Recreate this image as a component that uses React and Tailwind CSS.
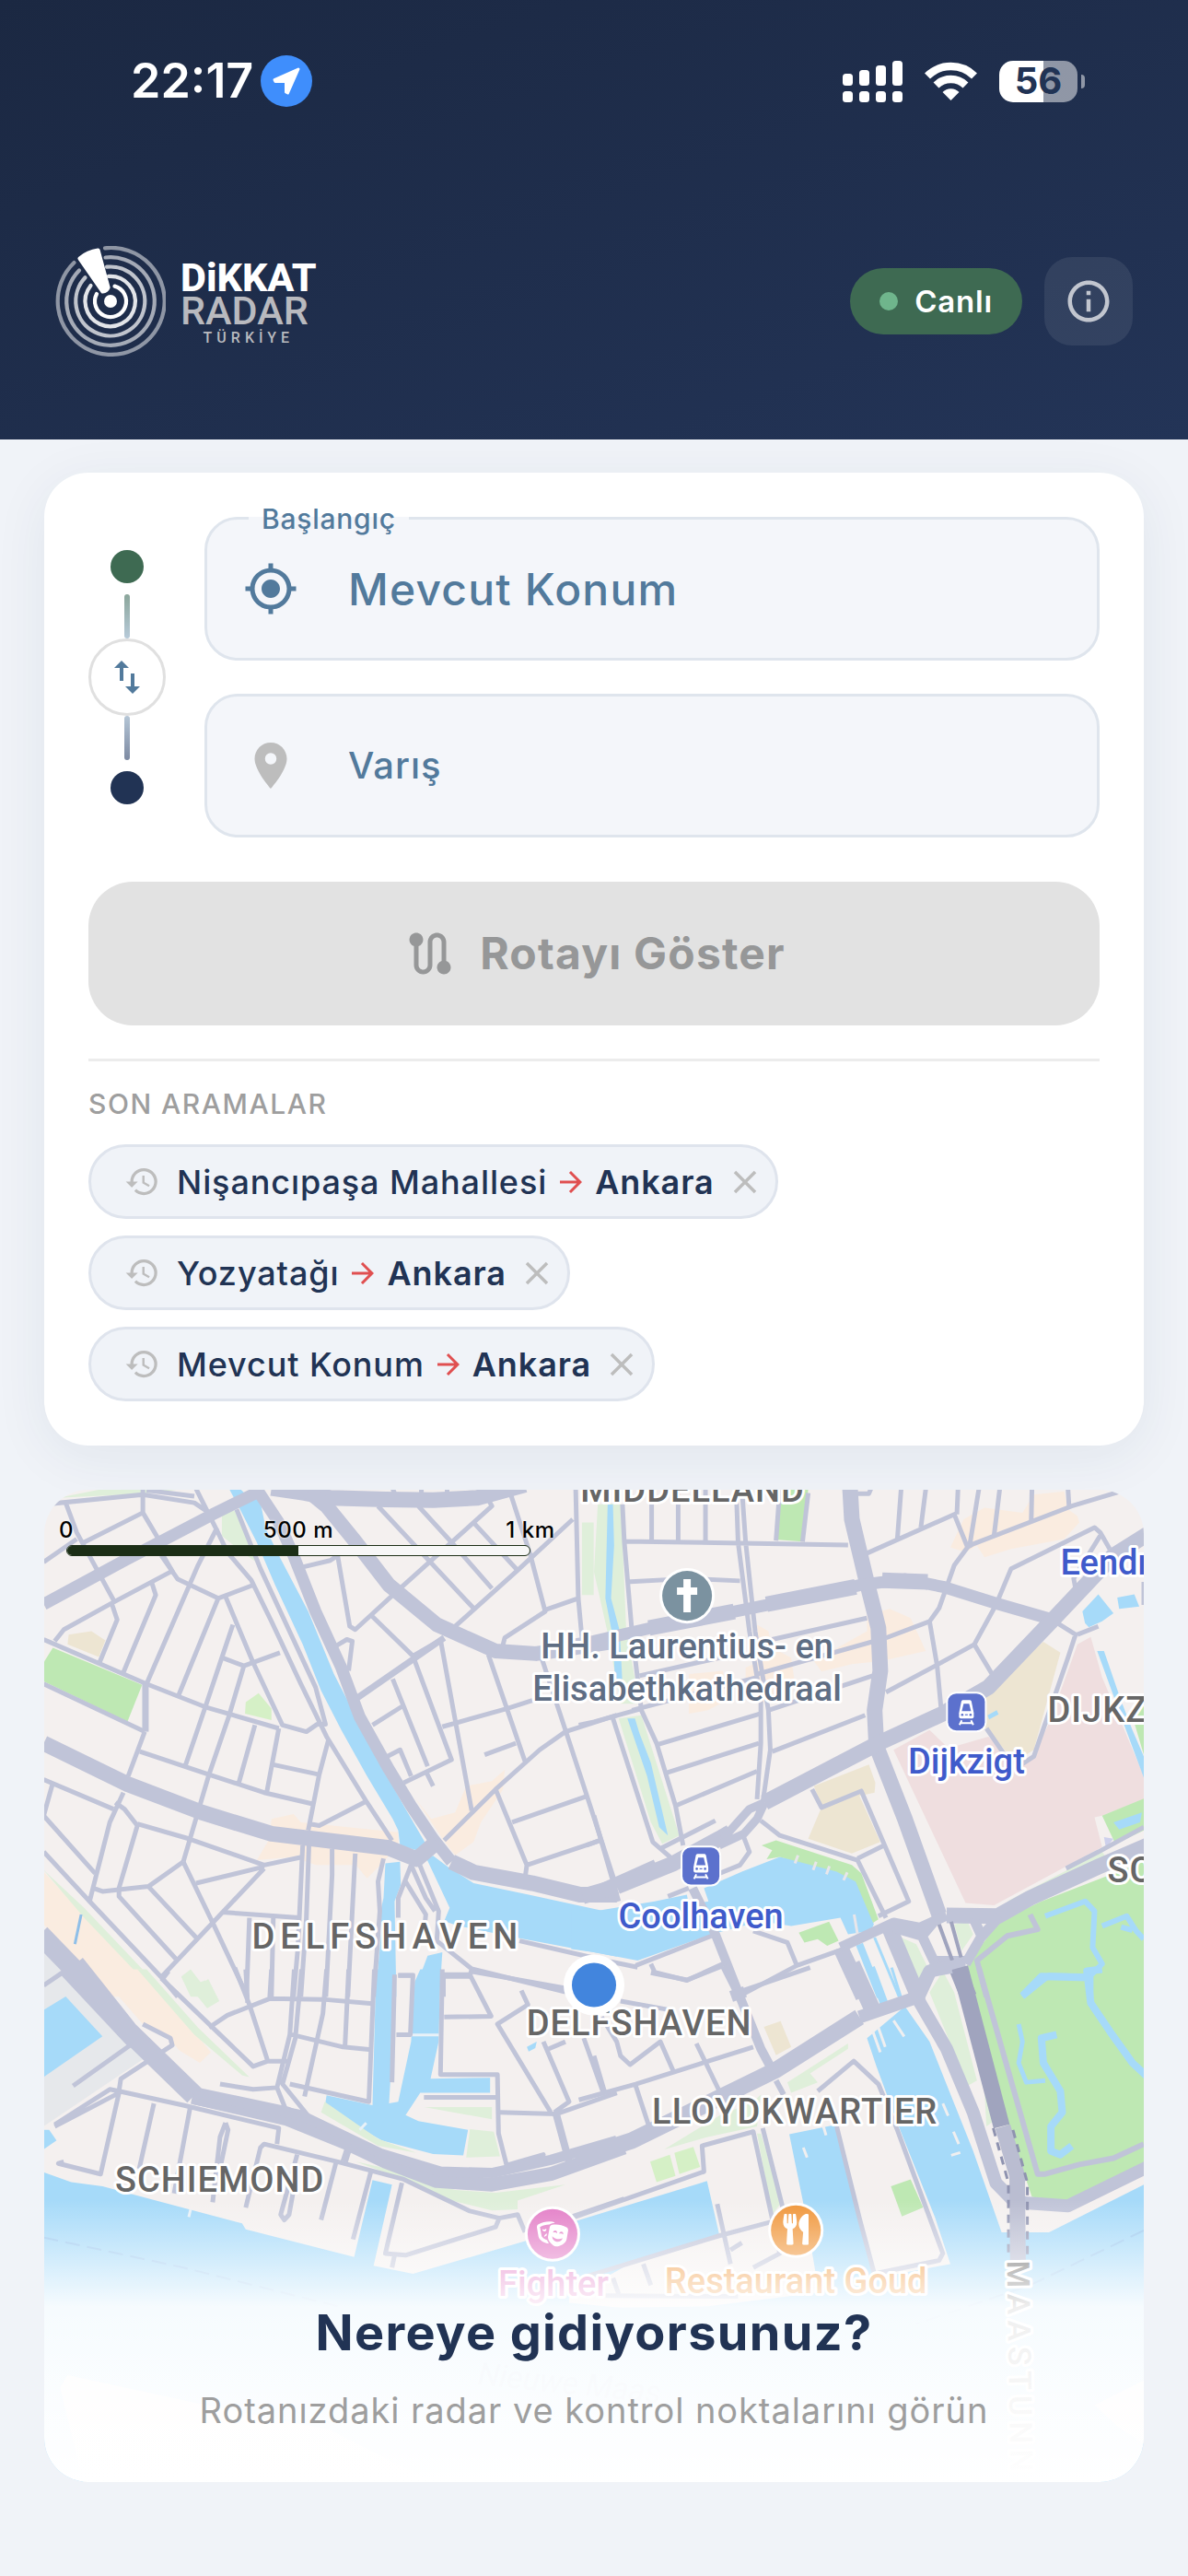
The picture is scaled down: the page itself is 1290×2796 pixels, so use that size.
// src/App.jsx

import { useState } from 'react';
import {
  MdArrowForward,
  MdClose,
  MdHistory,
  MdInfoOutline,
  MdLocationOn,
  MdMyLocation,
  MdRoute,
  MdSwapVert,
} from 'react-icons/md';
import { FaTheaterMasks, FaUtensils } from 'react-icons/fa';

const ROAD = '#c0c4d8';
const WATER = '#a6daf9';
const PARK = '#bee8b3';
const GRASS = '#dfefda';
const LAWN = '#d5f0c6';
const SHOPS = '#faece0';
const SCHOOL = '#ede5d2';
const HOSPITAL = '#efdedf';
const PORT = '#e6e8eb';
const LAND = '#f4f0ef';
const TUNNEL = '#a0a4be';

// Map is cut into four tiles, each one has its own coordinate space.
// areas: [fill, path], roads: [stroke, width, path, dash]
const tiles = [
  {
    id: 'nw',
    transform: 'translate(40 1600) scale(0.3986 0.35714)',
    areas: [
      [GRASS, 'M60 75L180 48H400L290 62Z'],
      [GRASS, 'M505 115L540 115 570 190 605 275 560 240 505 190Z'],
      [GRASS, 'M1485 150H1517V370H1485Z'],
      [SCHOOL, 'M88 490L150 480 188 508 170 558 85 520Z'],
      [PARK, 'M45 530L288 643 248 755 20 632V575Z'],
      [LAWN, 'M570 695L605 668 640 715V750L568 730Z'],
      [SHOPS, 'M640 1050L700 1035 720 1060 985 1090V1130L945 1180 900 1230 870 1190 760 1190 700 1165 600 1175 635 1110Z'],
      [SHOPS, 'M1030 985L1075 1050 1140 1030 1170 950 1240 935 1275 900 1270 960 1210 1060 1190 1120 1140 1160 1105 1110Z'],
      [PORT, 'M20 1420L50 1450 170 1590H20Z'],
      [SHOPS, 'M20 1210L120 1330 345 1590H200L20 1370Z'],
      [GRASS, 'M20 1205L130 1320 360 1590H335L130 1350Z'],
      [GRASS, 'M395 1530L415 1512 440 1548 460 1540 480 1590H420Z'],
      [WATER, 'M525 48H555L580 75H600L612 100 625 170 665 260 740 420 810 610 870 740 930 870 1000 1010 1060 1125 1050 1150 990 1130 985 1085 970 1050 900 920 830 780 775 660 725 520 650 340 600 210 550 100Z'],
      [WATER, 'M1062 1170L1080 1162 1120 1195 1190 1245 1340 1280 1580 1338V1468L1315 1412 1150 1375 1110 1360 1125 1320Z'],
      [WATER, 'M950 1185L990 1180 992 1250 975 1300 980 1590H923L940 1380 935 1340 945 1290Z'],
      [WATER, 'M1065 1465L1105 1455 1097 1590H1032L1050 1510Z'],
    ],
    roads: [
      ['#8fbfe8', 3, 'M122 1340L105 1430'],
      [ROAD, 5, 'M20 95L290 65 430 90 470 120M300 52L430 70M290 48V120L130 210M290 120L330 195M80 90L110 180 215 395M340 250L385 322 495 380 590 340M435 48L490 170 440 280 300 640M495 380L387 675'],
      [ROAD, 5, 'M515 375L590 575 670 765 735 785 765 762 787 762 760 650 610 290 545 110M490 170L520 240 585 325 640 450 720 640 790 800 900 1000 968 1115'],
      [ROAD, 5, 'M50 510L75 475 205 395 370 297 345 250M205 395L220 445 172 575M315 335L325 370 237 605M20 505L300 640 460 710 660 775M20 640L295 785M20 270L110 200'],
      [ROAD, 7, 'M297 785V640'],
      [ROAD, 5, 'M295 785L250 920M237 970L200 1060 145 1300M282 845L470 915 620 970 755 1005M460 710L405 890M525 735L470 915 400 1180M595 765L550 945M660 775L627 970M795 810L770 915 740 1085M645 885L770 915M745 1065L770 1070 900 995'],
      [ROAD, 5, 'M535 460L505 560 460 710M505 560L565 585 663 545M565 585L525 735M20 930L210 1020M45 940L20 1040 160 1215M20 1150L145 1300 340 1530 385 1590M215 1000L240 1020 275 1070 225 1260V1285L380 1475'],
      [ROAD, 5, 'M275 1065L415 1110 620 1190 725 1165M400 1180L480 1365 575 1590M400 1180L305 1255 180 1270 155 1260M305 1255L435 1410M435 1245L620 1195M620 1200L480 1365 340 1530M505 1333L715 1350'],
      [ROAD, 5, 'M725 1130L712 1440 700 1590M742 1130L735 1350 720 1590M580 1350L572 1590M645 1350L640 1590M805 1140V1220L788 1590M868 1155L848 1590M945 1170L930 1240 935 1330 918 1590'],
      [ROAD, 5, 'M725 285L800 265 820 250 853 465 868 475 985 355 1240 100 1230 80M910 430L1025 555 1110 500M1040 100L1130 210 1240 350M930 100L1190 410M1190 150L1310 295M1290 60L1345 250 1385 420 1275 500 1268 530'],
      [ROAD, 5, 'M1460 140L1310 295 1140 465M1468 48L1475 380 1485 500M1385 415L1475 380M815 525L845 505 860 510 850 600M970 48L975 60M1048 48V60M1118 48V60'],
      [ROAD, 7, 'M870 685L1110 500'],
      [ROAD, 5, 'M1025 555L1130 870 1000 940M970 625L1065 890M915 765L1000 705M1100 505L1185 1025M1230 550L1330 875M1375 560L1440 780 1500 985 1580 1260M1105 770L1280 715 1350 690M1220 855L1305 820'],
      [ROAD, 5, 'M1110 1115L1250 960 1370 840 1440 785 1580 735M1250 960L1335 1190 1330 1230M1295 1060L1500 980M1335 1190L1535 1115M955 860L990 840 1020 920M1060 905L1080 950'],
      [ROAD, 5, 'M1020 1190L1060 1290 1085 1330M1005 1240L1060 1340 1055 1400M1020 1190L985 1290V1350M1040 1180L1095 1330 1090 1420 1185 1505 1440 1575M1108 1590V1528H1180L1185 1505M1315 1420L1530 1475M985 1525H1030'],
      [ROAD, 13, 'M20 398L240 265 480 125 620 48M595 40L660 150 700 250 760 420 830 590 880 740 960 900 1020 1010 1080 1110 1130 1180'],
      [ROAD, 17, 'M640 45L730 60 800 75 950 80 1080 82 1200 75 1330 35M1130 1180L1190 1212 1350 1245 1480 1280 1580 1280M20 820L250 945 450 1030 640 1095 960 1138 1035 1172 1090 1120'],
      [ROAD, 16, 'M740 55L790 100 870 210 960 340 1090 460 1250 540 1360 548 1580 510'],
      [ROAD, 22, 'M10 1400L175 1590'],
    ],
  },
  {
    id: 'ne',
    transform: 'translate(645 1600) scale(0.41135 0.35714)',
    areas: [
      [GRASS, 'M10 95L70 90 75 200 85 480 120 700 70 700 35 480 0 300Z'],
      [WATER, 'M36 95H50L53 220 45 380 68 480 75 640 55 620 50 500 30 380Z'],
      [GRASS, 'M65 745L125 735 225 1100 180 1125 150 1060Z'],
      [WATER, 'M88 745L108 745 120 790 150 880 195 1100 172 1075 140 920Z'],
      [PARK, 'M487 90L510 48H565L550 208 485 202Z'],
      [SHOPS, 'M975 140L1030 105 1130 120 1160 65 1240 55 1250 110 1275 130 1280 150 1240 200 1100 230 1030 255 1010 220 980 240 940 225Z'],
      [SHOPS, 'M720 430L780 412 835 440 875 540 760 570 680 580 600 602 580 570 720 480Z'],
      [SHOPS, 'M430 460L460 480 470 530 520 560 530 640 440 700 400 690 400 590 440 570Z'],
      [SHOPS, 'M250 610L340 600 350 690 300 720 250 730Z'],
      [HOSPITAL, 'M885 780L935 835 1040 800 1085 845 1150 870 1200 760 1275 520 1310 497 1340 620 1450 920V990L1340 1040 1320 1045 1340 1135 1055 1312 980 1305 790 840Z'],
      [SCHOOL, 'M1185 512L1230 545 1160 840 1140 855 1090 850 1030 770 1020 700 1050 650Z'],
      [SCHOOL, 'M580 950L725 885 742 940 740 970 700 980 755 1120 680 1155 565 1110 600 1015Z'],
      [WATER, 'M1038 735L1062 720 1067 732 1042 748Z'],
      [WATER, 'M1288 420L1330 368 1370 425 1340 450 1305 468 1295 455Z'],
      [WATER, 'M1380 378L1425 368 1438 405 1385 412Z'],
      [WATER, 'M1327 540H1345L1390 690 1420 780 1450 860V925L1400 770Z'],
      [PARK, 'M1415 720L1450 705V855Z'],
      [PARK, 'M1340 1040L1450 988V1085L1375 1125Z'],
      [WATER, 'M1370 1060L1445 1030 1440 1060 1385 1082Z'],
      ['#cdd0ec', 'M1345 1105L1370 1110 1350 1138Z'],
      [PARK, 'M1070 1360L1180 1300 1450 1180V1590H1000L985 1490Z'],
      [GRASS, 'M1090 1300L1240 1210 1340 1150 1350 1165 1130 1290Z'],
      [WATER, 'M-60 1325L0 1330 160 1300 245 1280 250 1310 302 1300 290 1260 390 1210 490 1165 650 1200 695 1225 738 1370 730 1390 670 1400 650 1350 520 1375 440 1360 310 1400 115 1480 0 1455-60 1445Z'],
      [PARK, 'M442 1130L480 1115 680 1190 705 1215 750 1355 736 1365 690 1240 640 1210 490 1165 455 1172 470 1145Z'],
      [PARK, 'M540 1395L620 1362 645 1420 615 1435 590 1415 555 1425Z'],
      [GRASS, 'M810 1410L850 1430 880 1500 860 1555Z'],
      [GRASS, 'M950 1370L985 1360 1000 1400 970 1450Z'],
    ],
    roads: [
      [WATER, 8, 'M700 1430L755 1590'],
      [WATER, 3, 'M740 1410L805 1590'],
      [WATER, 6, 'M1190 1345L1295 1300 1320 1330 1315 1440 1340 1490 1310 1525V1590M1340 1375L1405 1345 1430 1390 1450 1415M1390 1378L1420 1388M1130 1590L1200 1525 1310 1528'],
      ['#e8e6ea', 3, 'M538 1160L530 1185M586 1180L578 1205M621 1193L613 1218M668 1212L658 1236M686 1340L695 1400'],
      [ROAD, 5, 'M75 95L80 210 100 480 125 720 165 820 215 1010 235 1130M152 48V205M222 48V205M294 48V205M80 207L670 218M375 48L380 210 410 480 440 690V820L430 990M390 48L400 210 425 480 460 720 465 840 445 1000'],
      [ROAD, 5, 'M490 48L480 205M565 60L550 208M85 330L250 320 385 327M720 243L950 125 985 225 950 280 910 410 885 450 770 500M810 48L800 200M875 48L862 165M960 48L957 125M1015 48L990 225M1070 48L1055 190M1155 48L1153 150M1250 48L1253 105'],
      [ROAD, 5, 'M985 225L1000 215 1260 100 1390 55M1360 230L1335 180 1320 165 1100 290 1060 400 1003 520 1055 620M1335 190L1265 320 1270 350M1003 520L900 585 770 665M885 450L905 585 915 710M695 62H725L730 48M1450 330V400'],
      [ROAD, 5, 'M470 505L720 440M120 615L390 545M430 610L770 500M100 720L430 620M-40 765L0 755 125 715M460 720L735 615M165 825L440 730M470 845L715 735M190 910L435 820M215 1010L430 905'],
      [ROAD, 5, 'M50 745L155 1120 205 1170M175 1140L320 1055M0 1040L65 1300M-20 1130L15 1115M5 1260L160 1180M575 960L600 1015 705 965 830 1300 750 1345M440 1055L490 1100 695 1175 770 1350M695 1170L765 1130'],
      [ROAD, 5, 'M1215 450L1270 490 1250 560 1160 860 1120 890 1080 850 1035 775M1275 490L1330 465M395 1105L410 1150 385 1190 310 1225M1245 1200L1330 1150 1450 1075M195 1285L250 1260'],
      [ROAD, 5, 'M110 1495L310 1405M150 1490L160 1515 245 1540 340 1490M380 1590L535 1495 645 1450M420 1390L510 1425 535 1495M30 1480L115 1500'],
      [ROAD, 6, 'M1150 1340L1170 1385 1090 1405 1010 1480 1035 1590'],
      [ROAD, 10, 'M260 1260L320 1400 385 1590'],
      [ROAD, 17, 'M675 40L680 140 715 310 750 470 755 600 740 720 745 830 820 1050 910 1340'],
      [ROAD, 13, 'M-50 520L0 510 150 470 350 425 480 395 700 340 820 322 920 345 1060 395 1210 445'],
      [ROAD, 17, 'M145 470L370 420M455 398L690 345M760 325L880 330M1460 185L1370 250 1210 445 1040 650 920 730 750 820 600 910 450 1000M60 1255L210 1185 330 1110 360 1090M60 1255L-30 1285'],
      [ROAD, 9, 'M450 1000L410 1020 340 1110M450 1000L430 1050 395 1095 330 1130'],
      [ROAD, 17, 'M1460 1130L1330 1195 1150 1290 1065 1345 930 1343M650 1440L710 1590M775 1370L855 1590M900 1490H980'],
      [ROAD, 11, 'M930 1343L860 1380 790 1365 650 1440M790 1380L865 1405 905 1350M865 1405L900 1490 860 1590M980 1490L1020 1410 1070 1345M1000 1350L1020 1400'],
      [TUNNEL, 4, 'M910 1370L945 1480M942 1362L968 1470'],
      [TUNNEL, 18, 'M960 1510L988 1590'],
    ],
  },
  {
    id: 'sw',
    transform: 'translate(40 2140) scale(0.3986 0.38265)',
    areas: [
      [PORT, 'M20 35L65 5 290 250 20 440Z'],
      [WATER, 'M20 110L80 72 180 185 20 300Z'],
      [WATER, 'M20 450H35L55 480 20 505Z'],
      [SHOPS, 'M160-5H290L475 230 445 260 390 225 370 200 290 150Z'],
      [GRASS, 'M275-5H300L440 160 580 300 560 295 430 180Z'],
      [GRASS, 'M395 15L420-5 450 35 468 22 498 85 465 105Z'],
      [WATER, 'M925-5H975L970 200 960 375 985 370 1020 200 1030 30 1045-5H1100L1095 200 1073 305 1235 302V345H1045L1005 408 1040 425 1175 450 1162 522 1080 518 940 480 785 385 790 352 915 380Z'],
      [GRASS, 'M785 370L775 400 930 495 1035 515 930 475Z'],
      [GRASS, 'M1055 385H1240V420Z'],
      [GRASS, 'M1180 448L1245 455 1262 525 1170 528Z'],
      [GRASS, 'M870 540L1000 570 1140 620 1250 628 1440 605 1310 650V675L1240 678 1130 650 1000 590Z'],
      [WATER, 'M20 570L95 598 180 610 380 665 560 715 570 732 865 810 915 592 968 605 918 835 1025 858 1330 765 1600 670V838L1450 925V940L1600 955V1460H20Z'],
      [WATER, 'M1335 215L1362 200 1358 218 1340 228Z'],
      [LAND, 'M65 1180L85 1145 440 1225 800 1300 1100 1460H130Z'],
    ],
    roads: [
      ['#9cc8ee', 2, 'M20 755L400 840 820 950', '16 8'],
      ['#e8f1f8', 3, 'M420 675L415 697M898 430L880 450M1022 181H1100'],
      [ROAD, 5, 'M20 40L70 5 255 210 100 325M290 150L365 190 370 210 230 305 225 340M50 435L200 335 225 340M50 440L225 345 175 575 60 545 75 540M225 340L400 380 660 445 655 490M320 375L280 560M418 390L375 630'],
      [ROAD, 5, 'M515 430L500 470 480 655M515 430L522 450 500 560M570 670L610 500 620 490 820 540 1000 590 1180 680 1260 700 1310 690 1330 740M710 520L665 690 675 705 688 690 700 620M815 545L775 705M910 570L862 760M995 600L950 800 1005 805 1250 725 1260 700M975 805L968 840'],
      [ROAD, 8, 'M850 500L838 540M1415 405L1450 540'],
      [ROAD, 5, 'M540-10L580 95 630 255H685M340 20L590 270 630 255M345 20L360 0M470 160L520 125 635 78 780 80 915 92M640-5L635 78M575 90L570-5'],
      [ROAD, 5, 'M702-5L690 180 655 330 680 395M722-5L705 190 670 320 740 410M790-5L780 120 730 355M850-5L840 215M695 180L835 215 905 222M690 320L905 370 920-5M500 320L590 335 655 330'],
      [ROAD, 5, 'M1105-5L1100 293H1255L1258 460 1280 550 1380 520 1375 535M1110 130L1238 128 1180 10H1105M1055 358H1255M985 12H1025L1018 180H980M975 10L968 315'],
      [ROAD, 5, 'M1260 400L1415 405 1580 345M1320 55L1338 95 1255 150 1400 400M1380 200L1450 370 1410 400M1395 220L1440 200M1490 190L1545 350M1180 0L1440 48M1460 695L1600 645'],
      [ROAD, 22, 'M105-20L250 170 430 352'],
      [ROAD, 19, 'M425 352L680 408 800 460'],
      [ROAD, 15, 'M430 358L680 418 850 490 950 540 1090 595 1240 605 1400 575 1600 500'],
      [ROAD, 11, 'M430 345L720 408 940 518 1100 568 1240 572 1400 535 1580 480'],
    ],
  },
  {
    id: 'se',
    transform: 'translate(645 2140) scale(0.41135 0.38265)',
    areas: [
      [WATER, 'M-60 712L298 595 330 745-60 875Z'],
      [LAWN, 'M148 540L200 520 215 580 165 598Z'],
      [LAWN, 'M212 515L262 498 280 555 225 575Z'],
      [GRASS, 'M185 505L330 410 420 370 440 350 430 440 300 470Z'],
      [GRASS, 'M430 460H440L495 655 470 690Z'],
      [GRASS, 'M510 315L670 205V220L570 290 590 315 520 345Z'],
      [SCHOOL, 'M448 158L492 142 520 215 480 238Z'],
      [WATER, 'M515 462L640 435 700 700 740 875 585 860 560 700Z'],
      [WATER, 'M720 190L820 100 885 200 1000 510 1075 740 1200 740 1450 605V1460H-60V955L300 950 600 910 585 850 740 870 940 830 900 700 800 430 745 270Z'],
      [PARK, 'M783 610L835 590 868 670 812 695Z'],
      [PARK, 'M1000-5H1450V560L1250 655 1155 640 1060 340 990 100Z'],
      [GRASS, 'M885 60L920 0 950 60 1010 310 985 325Z'],
      [GRASS, 'M1030 340L1060 420 1035 440Z'],
      [LAND, 'M1320 1230L1450 1160V1340L1380 1290Z'],
    ],
    roads: [
      [WATER, 9, 'M730-10L775 120'],
      [WATER, 3, 'M785-10L820 110'],
      [WATER, 8, 'M1340-5L1300 0 1310 90 1360 170 1420 260 1460 300M1130 70L1180 15 1310 18M1220 180L1180 190 1185 260 1230 340 1235 400 1205 440V510L1230 520 1260 495'],
      [WATER, 5, 'M1120 150L1130 200 1120 260 1140 315 1190 310'],
      ['#f0eff0', 3, 'M735 170L755 230M750 160L768 215M790 140L818 185M920 375L934 410M948 455L962 490M942 522L966 514M605 440L612 465M552 500L562 528'],
      ['#9cc8ee', 2, 'M1450 735L1150 890 850 1000', '16 8'],
      [ROAD, 5, 'M380 60L570-10M150 5L245 25 340-15M70 85L200 110M20 130L60 200 70 240 95 265 175 200 210 285M-40 365L110 320 420 215M0 240L30 350M110 325L145 440M270 205L335 350'],
      [ROAD, 5, 'M590 340L685 255 750 320 800 450 920 800 910 820 750 855M640 440L700 700 740 860M-60 700L290 568 285 495 420 455 490 800 420 840M445 445L500 680M-20 865L330 750 470 710M325 660L360 830M360 790L390 770M130 830L150 890M50 870L65 915M30 920L380 922'],
      [ROAD, 6, 'M1015-10L1170 575H1190L1280 548 1370 530 1450 490M480 310L500 350'],
      [ROAD, 10, 'M345-15L380 60 440 220 475 290'],
      [ROAD, 16, 'M375 50L385 80'],
      [ROAD, 18, 'M-50 530L0 515 100 480 300 375 480 280 700 130M680-20L735 110'],
      [ROAD, 14, 'M700 130L850 75 885 0 960-15M820-20L860 90 930 220 1000 400 1060 600 1110 655 1250 665 1460 555'],
      [TUNNEL, 18, 'M965-10L1075 440'],
      ['#babdd1', 17, 'M1078 440L1116 580 1118 820'],
      ['#8f93b0', 3, 'M1053 445L1093 600V800M1105 450L1143 600V810', '9 7'],
    ],
  },
];

const placeNames = [
  { text: 'MIDDELLAND', x: 752, y: 1631, spacing: 1 },
  { text: 'DELFSHAVEN', x: 421, y: 2116, spacing: 6 },
  { text: 'DELFSHAVEN', x: 694, y: 2209, spacing: 1 },
  { text: 'LLOYDKWARTIER', x: 863, y: 2305, spacing: 1 },
  { text: 'SCHIEMOND', x: 239, y: 2379, spacing: 1 },
  { text: 'DIJKZ', x: 1137, y: 1870, spacing: 1, anchor: 'start' },
  { text: 'SC', x: 1202, y: 2044, spacing: 1, anchor: 'start' },
  { text: 'HH. Laurentius- en', x: 746, y: 1801, color: '#5f6e84' },
  { text: 'Elisabethkathedraal', x: 746, y: 1847, color: '#5f6e84' },
  { text: 'Dijkzigt', x: 1049, y: 1926, color: '#3f5bcb' },
  { text: 'Coolhaven', x: 761, y: 2094, color: '#3f5bcb' },
  { text: 'Eendr', x: 1151, y: 1710, color: '#3f5bcb', anchor: 'start' },
  { text: 'Fighter', x: 601, y: 2492, color: '#e37cc6' },
  { text: 'Restaurant Goud', x: 864, y: 2489, color: '#f0963a' },
];

const initialSearches = [
  { id: 1, from: 'Nişancıpaşa Mahallesi', to: 'Ankara' },
  { id: 2, from: 'Yozyatağı', to: 'Ankara' },
  { id: 3, from: 'Mevcut Konum', to: 'Ankara' },
];

const TrainMarker = ({ x, y }) => (
  <g transform={`translate(${x} ${y})`}>
    <rect x="-22" y="-22" width="44" height="44" rx="11" fill="#fff" />
    <rect x="-20" y="-20" width="40" height="40" rx="9" fill="#5c71cd" />
    <path d="M-4-13H4Q5-13 5.500-11.500L8 1V5Q8 7 6 7H-6Q-8 7-8 5V1L-5.500-11.500Q-5-13-4-13Z" fill="#fff" />
    <path d="M-3-9H3L5-1H-5Z" fill="#5c71cd" />
    <circle cx="-4.500" cy="3" r="1.300" fill="#5c71cd" />
    <circle cx="4.500" cy="3" r="1.300" fill="#5c71cd" />
    <path d="M-1.500 3H1.500" stroke="#5c71cd" strokeWidth="1.200" />
    <path d="M-5 9L-7.500 14M5 9L7.500 14M-6 12H6" stroke="#fff" strokeWidth="2" fill="none" />
  </g>
);

const MapDrawing = () => (
  <svg
    className="absolute inset-0 h-full w-full"
    viewBox="48 1618 1194 1076"
    preserveAspectRatio="xMidYMid slice"
    fontFamily="Roboto, sans-serif"
    fontWeight="500"
    fontSize="38"
    aria-hidden="true"
  >
    <rect x="48" y="1618" width="1194" height="1076" fill={LAND} />
    {tiles.map(tile => (
      <g key={tile.id} transform={tile.transform}>
        {tile.areas.map(([fill, d]) => (
          <path key={d} d={d} fill={fill} />
        ))}
      </g>
    ))}
    {tiles.map(tile => (
      <g key={tile.id} transform={tile.transform} fill="none" strokeLinejoin="round">
        {tile.roads.map(([stroke, width, d, dash]) => (
          <path key={d} d={d} stroke={stroke} strokeWidth={width} strokeDasharray={dash} vectorEffect="non-scaling-stroke" />
        ))}
      </g>
    ))}

    {/* Place names */}
    <g stroke="#fff" strokeWidth="6" strokeLinejoin="round" paintOrder="stroke">
      {placeNames.map(({ text, x, y, spacing = 0, color = '#666', anchor = 'middle' }) => (
        <text key={text + y} x={x} y={y} fill={color} letterSpacing={spacing} textAnchor={anchor}>
          {text}
        </text>
      ))}
      <text transform="translate(1093 2454) rotate(89)" fill="#666" letterSpacing="6" fontSize="34">
        MAASTUNN
      </text>
    </g>
    <text transform="translate(518 2588) rotate(6)" fill="#8fb4dc" fontStyle="italic" fontWeight="400" fontSize="34">
      Nieuwe Maas
    </text>

    {/* Markers */}
    <circle cx="746" cy="1733" r="30" fill="#fff" />
    <circle cx="746" cy="1733" r="27" fill="#7b92a0" />
    <path d="M742 1715H750V1724H757V1732H750V1751H742V1732H735V1724H742Z" fill="#fff" />
    <TrainMarker x={761} y={2026} />
    <TrainMarker x={1049} y={1859} />
    <circle cx="600" cy="2425" r="30" fill="#fff" />
    <circle cx="600" cy="2425" r="27" fill="#e37cc6" />
    <FaTheaterMasks x={583} y={2408} size={34} color="#fff" />
    <circle cx="864" cy="2421" r="30" fill="#fff" />
    <circle cx="864" cy="2421" r="27" fill="#f0963a" />
    <FaUtensils x={847} y={2403} size={34} color="#fff" />
    <circle cx="645" cy="2155" r="33" fill="#fff" />
    <circle cx="645" cy="2155" r="24" fill="#4285dd" />
  </svg>
);

const ScaleBar = () => (
  <div className="relative w-[540px] pt-7 pl-6 text-2xl leading-8 font-medium tracking-wide whitespace-nowrap text-black text-shadow-[0_0_3px_#fff]">
    <div className="flex w-[504px] justify-between">
      <span className="flex w-0 justify-center">0</span>
      <span className="flex w-0 justify-center">500 m</span>
      <span className="flex w-0 justify-center">1 km</span>
    </div>
    <div className="flex h-3 w-[504px] overflow-hidden rounded-md border border-[#1c2e16] bg-[#f7f7f7]">
      <div className="w-1/2 bg-[#1c2e16]" />
    </div>
  </div>
);

const StatusBar = () => (
  <div className="flex h-14 items-center justify-between pr-28 pl-[142px] text-white">
    <div className="flex items-center gap-2">
      <span className="text-[52px] leading-none font-semibold">22:17</span>
      <span className="flex size-14 items-center justify-center rounded-full bg-[#3f8efc]">
        <svg className="size-8" viewBox="0 0 32 32" fill="#fff" stroke="#fff" strokeWidth="3" strokeLinejoin="round">
          <path d="M29 3L3 14.500 4 16.500H15.500V28L17.500 29Z" />
        </svg>
      </span>
    </div>
    <div className="flex items-center gap-6">
      <svg className="h-[45px] w-[65px]" viewBox="0 0 65 45" fill="#fff">
        <rect x="0" y="14" width="11" height="13" rx="3.500" />
        <rect x="18" y="10" width="11" height="17" rx="3.500" />
        <rect x="36" y="5" width="11" height="22" rx="3.500" />
        <rect x="54" y="0" width="11" height="27" rx="3.500" />
        <rect x="0" y="33" width="11" height="12" rx="3.500" />
        <rect x="18" y="33" width="11" height="12" rx="3.500" />
        <rect x="36" y="33" width="11" height="12" rx="3.500" />
        <rect x="54" y="33" width="11" height="12" rx="3.500" />
      </svg>
      <svg className="h-[42px] w-[57px]" viewBox="0 0 57 42" fill="none" stroke="#fff" strokeWidth="8.500">
        <path d="M3 15.500A36.500 36.500 0 0 1 54 15.500" />
        <path d="M12.500 25.500A23 23 0 0 1 44.500 25.500" />
        <path d="M28.500 42L19.500 33A12.500 12.500 0 0 1 37.500 33Z" fill="#fff" stroke="none" />
      </svg>
      <div className="flex items-center gap-1">
        <div className="flex h-[45px] w-[85px] items-center justify-center rounded-[15px] bg-linear-to-r from-white from-57% to-white/50 to-57% text-[40px] leading-none font-bold text-[#213354]">
          56
        </div>
        <span className="h-[15px] w-1 rounded-r-full bg-white/50" />
      </div>
    </div>
  </div>
);

const Logo = () => (
  <div className="flex items-center gap-4">
    <svg className="size-[120px]" viewBox="0 0 120 120" fill="none" stroke="#fff" strokeWidth="4.200" strokeLinecap="round">
      <path d="M54 2.300A58 58 0 1 1 20.500 18.100" opacity=".5" />
      <path d="M54.500 12.500A47.800 47.800 0 1 1 26 26.400" opacity=".6" />
      <path d="M56 22.700A37.500 37.500 0 1 1 32.500 34.300" opacity=".72" />
      <path d="M58 32.900A27.200 27.200 0 1 1 38.500 43" opacity=".88" />
      <path d="M64.500 43.600A17 17 0 1 1 45 52" />
      <circle cx="60" cy="60" r="7" fill="#fff" stroke="none" />
      <path d="M26.500 13.500Q35 6 46.500 4.500L57.500 45Q56 49 51.500 49.500Z" fill="#fff" strokeLinejoin="round" />
    </svg>
    <div className="flex flex-col pt-1 font-[Roboto,sans-serif] text-[43px] leading-9 text-white">
      <span className="font-extrabold">DiKKAT</span>
      <span className="font-medium text-[#b9babf]">RADAR</span>
      <span className="mt-1 self-center text-base leading-4 font-medium tracking-[5px] text-[#b9babf]">TÜRKİYE</span>
    </div>
  </div>
);

const RouteRail = ({ onSwap }) => (
  <div className="flex w-[84px] shrink-0 flex-col items-center justify-center">
    <span className="size-9 rounded-full bg-[#3e6a52]" />
    <span className="mt-3 h-12 w-1.5 rounded-full bg-linear-to-b from-[#8ba69b] to-[#b7cad9]" />
    <button
      type="button"
      aria-label="Değiştir"
      onClick={onSwap}
      className="flex size-[84px] items-center justify-center rounded-full border-3 border-[#e0e0e0] bg-white text-[#527a9c]"
    >
      <MdSwapVert size={48} />
    </button>
    <span className="mb-3 h-12 w-1.5 rounded-full bg-linear-to-b from-[#b5c6d6] to-[#7d8aa2]" />
    <span className="size-9 rounded-full bg-[#213354]" />
  </div>
);

const fieldClass =
  'relative flex h-[156px] items-center gap-[54px] rounded-[36px] border-3 border-[#dfe5ed] bg-[#f4f6fa] px-[39px]';

const SearchChip = ({ search, onRemove }) => (
  <li className="flex h-[81px] items-center rounded-full border-3 border-[#dfe4ed] bg-[#f0f3f8] pr-3 pl-9 text-4xl leading-none tracking-wide text-[#213354]">
    <MdHistory size={39} className="text-[#bdbdbd]" />
    <span className="ml-[18px] font-medium">{search.from}</span>
    <MdArrowForward size={36} className="mx-2 text-[#e04f50]" />
    <span className="font-semibold">{search.to}</span>
    <button type="button" aria-label="Sil" onClick={() => onRemove(search.id)} className="ml-3 text-[#bdbdbd]">
      <MdClose size={42} />
    </button>
  </li>
);

const App = () => {
  const [start, setStart] = useState('Mevcut Konum');
  const [destination, setDestination] = useState('');
  const [searches, setSearches] = useState(initialSearches);

  const handleSwap = () => {
    setStart(destination);
    setDestination(start);
  };

  const handleRemove = id => {
    setSearches(searches.filter(search => search.id !== id));
  };

  return (
    <div className="flex min-h-screen flex-col bg-[#f0f3f8] font-[Inter,sans-serif]">
      <header className="bg-linear-to-br from-[#1b2842] to-[#233457] pt-15 pb-[90px]">
        <StatusBar />
        <div className="mt-[151px] flex items-center justify-between px-15">
          <Logo />
          <div className="flex items-center gap-6">
            <span className="flex h-18 items-center gap-[18px] rounded-full bg-[#3e6a52] px-8 text-[33px] leading-none font-semibold tracking-wide text-white">
              <span className="size-5 rounded-full bg-[#6fb58c]" />
              Canlı
            </span>
            <button
              type="button"
              aria-label="Bilgi"
              className="flex size-24 items-center justify-center rounded-[30px] bg-white/8 text-white/70"
            >
              <MdInfoOutline size={54} />
            </button>
          </div>
        </div>
      </header>

      <main className="flex flex-1 flex-col gap-12 px-12 pt-9 pb-[102px]">
        <section className="rounded-[48px] bg-white p-12 shadow-[0_12px_60px_rgba(33,51,84,0.07)]">
          <div className="flex gap-[42px]">
            <RouteRail onSwap={handleSwap} />
            <div className="flex min-w-0 flex-1 flex-col gap-9 text-[#527a9c]">
              <div className={fieldClass}>
                <label
                  htmlFor="start"
                  className="absolute -top-[3px] left-[45px] flex h-[3px] items-center bg-[#f4f6fa] px-3.5 text-3xl font-medium tracking-wide"
                >
                  Başlangıç
                </label>
                <MdMyLocation size={60} className="shrink-0" />
                <input
                  id="start"
                  value={start}
                  onChange={e => setStart(e.target.value)}
                  className="min-w-0 flex-1 bg-transparent text-5xl font-medium tracking-wide outline-none"
                />
              </div>
              <div className={fieldClass}>
                <MdLocationOn size={60} className="shrink-0 text-[#bdbdbd]" />
                <input
                  id="destination"
                  aria-label="Varış"
                  placeholder="Varış"
                  value={destination}
                  onChange={e => setDestination(e.target.value)}
                  className="min-w-0 flex-1 bg-transparent text-[40px] font-medium tracking-wide outline-none placeholder:text-[#527a9c]"
                />
              </div>
            </div>
          </div>

          <button
            type="button"
            disabled={!destination}
            className="mt-12 flex h-[156px] w-full items-center justify-center gap-6 rounded-[48px] bg-[#e2e2e2] text-5xl font-bold tracking-wide text-[#969798]"
          >
            <MdRoute size={60} />
            Rotayı Göster
          </button>

          <div className="mt-9 border-t-3 border-[#ececec] pt-[26px]">
            <h2 className="text-3xl leading-10 font-medium tracking-wider text-[#9e9e9e]">SON ARAMALAR</h2>
            <ul className="mt-6 flex flex-col items-start gap-[18px]">
              {searches.map(search => (
                <SearchChip key={search.id} search={search} onRemove={handleRemove} />
              ))}
            </ul>
          </div>
        </section>

        <section className="relative flex flex-1 flex-col justify-between overflow-hidden rounded-[48px]">
          <MapDrawing />
          <ScaleBar />
          <div className="relative bg-linear-to-b from-white/0 via-white/90 via-38% to-white px-12 pt-28 pb-[54px] text-center">
            <h1 className="text-[54px] leading-16 font-bold tracking-wide text-[#213354]">Nereye gidiyorsunuz?</h1>
            <p className="mt-7 text-[38px] leading-12 tracking-wide text-[#9e9e9e]">
              Rotanızdaki radar ve kontrol noktalarını görün
            </p>
          </div>
        </section>
      </main>
    </div>
  );
};

export default App;
